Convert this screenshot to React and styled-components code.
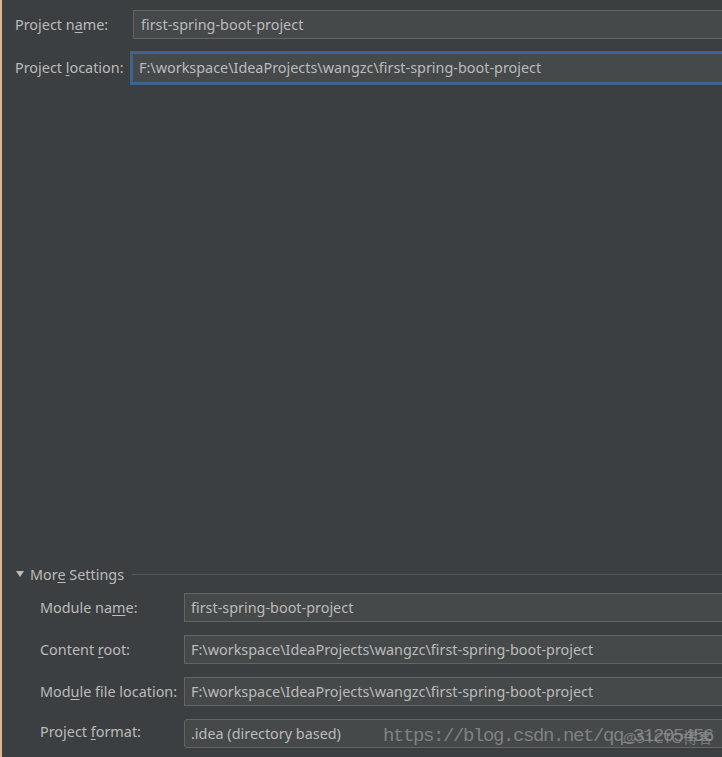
import React from 'react';
import styled, { createGlobalStyle } from 'styled-components';

const textColor = '#bbbbbb';

const GlobalStyle = createGlobalStyle`
  html, body {
    margin: 0;
    padding: 0;
    background: #3c3f41;
    overflow: hidden;
  }
  body {
    font-family: "Noto Sans", "Open Sans", sans-serif;
    font-size: 14.4px;
    color: ${textColor};
  }
`;

const Page = styled.div`
  position: relative;
  width: 722px;
  height: 757px;
  box-sizing: border-box;
  border-left: 2px solid #dcb893;
  background: #3c3f41;
  display: flex;
  flex-direction: column;
  overflow: hidden;
`;

const TopForm = styled.div`
  display: flex;
  flex-direction: column;
  gap: 12px;
  padding: 10px 0 0 13px;
`;

const Row = styled.div`
  display: flex;
  align-items: center;
  height: ${p => p.$height || 29}px;
`;

const Label = styled.div`
  flex: 0 0 ${p => p.$width}px;
  white-space: nowrap;
  line-height: 18px;
  margin-top: ${p => p.$shift || 0}px;
`;

const Key = styled.span`
  text-decoration: underline;
  text-underline-offset: 2px;
`;

const Field = styled.div`
  flex: 1 0 auto;
  height: 100%;
  box-sizing: border-box;
  margin-left: ${p => p.$focused ? -3 : 0}px;
  margin-right: -20px;
  background: #45494a;
  border: ${p => p.$focused ? '3px solid #3e6390' : '1px solid #646464'};
  border-radius: ${p => p.$combo ? 3 : 0}px;
  padding-left: ${p => p.$pad || 7}px;
  display: flex;
  align-items: center;
  white-space: nowrap;
  line-height: 18px;
`;

const Spacer = styled.div`
  flex: 1;
`;

const Section = styled.div`
  display: flex;
  flex-direction: column;
  gap: 13px;
  padding: 0 0 9px 0;
`;

const SectionHeader = styled.div`
  display: flex;
  align-items: center;
  gap: 6px;
  padding-left: 14px;
  height: 18px;
  margin-bottom: -3px;
`;

const Triangle = styled.span`
  width: 0;
  height: 0;
  border-left: 4px solid transparent;
  border-right: 4px solid transparent;
  border-top: 6px solid ${textColor};
`;

const HeaderLine = styled.div`
  flex: 1;
  height: 1px;
  background: #545758;
  margin-left: 2px;
`;

const SubRows = styled.div`
  display: flex;
  flex-direction: column;
  gap: 13px;
  padding-left: 38px;
`;

const Watermark = styled.div`
  position: absolute;
  left: 381px;
  top: 725px;
  font-family: "Liberation Mono", monospace;
  font-size: 19px;
  letter-spacing: -1.4px;
  color: rgba(150, 150, 150, 0.75);
  white-space: nowrap;
  pointer-events: none;
`;

const WatermarkBadge = styled.div`
  position: absolute;
  left: 621px;
  top: 726px;
  font-family: "Noto Sans", "Noto Sans CJK SC", sans-serif;
  font-size: 15px;
  color: rgba(150, 150, 150, 0.7);
  white-space: nowrap;
  pointer-events: none;
`;

const moduleRows = [
  { label: <>Module na<Key>m</Key>e:</>, value: 'first-spring-boot-project' },
  { label: <>Content <Key>r</Key>oot:</>, value: 'F:\\workspace\\IdeaProjects\\wangzc\\first-spring-boot-project' },
  { label: <>Mod<Key>u</Key>le file location:</>, value: 'F:\\workspace\\IdeaProjects\\wangzc\\first-spring-boot-project' },
];

const App = () => {
  return (
    <>
      <GlobalStyle />
      <Page>
        <TopForm>
          <Row>
            <Label $width={118}>Project n<Key>a</Key>me:</Label>
            <Field>first-spring-boot-project</Field>
          </Row>
          <Row $height={34}>
            <Label $width={118}>Project <Key>l</Key>ocation:</Label>
            <Field $focused $pad={6}>F:\workspace\IdeaProjects\wangzc\first-spring-boot-project</Field>
          </Row>
        </TopForm>

        <Spacer />

        <Section>
          <SectionHeader>
            <Triangle />
            <span>Mor<Key>e</Key> Settings</span>
            <HeaderLine />
          </SectionHeader>
          <SubRows>
            {moduleRows.map((row, i) => (
              <Row key={i}>
                <Label $width={144}>{row.label}</Label>
                <Field $pad={6}>{row.value}</Field>
              </Row>
            ))}
            <Row>
              <Label $width={144} $shift={-4}>Project <Key>f</Key>ormat:</Label>
              <Field $combo $pad={6}>.idea (directory based)</Field>
            </Row>
          </SubRows>
        </Section>

        <Watermark>https://blog.csdn.net/qq_31205456</Watermark>
        <WatermarkBadge>@51CTO博客</WatermarkBadge>
      </Page>
    </>
  );
};

export default App;
